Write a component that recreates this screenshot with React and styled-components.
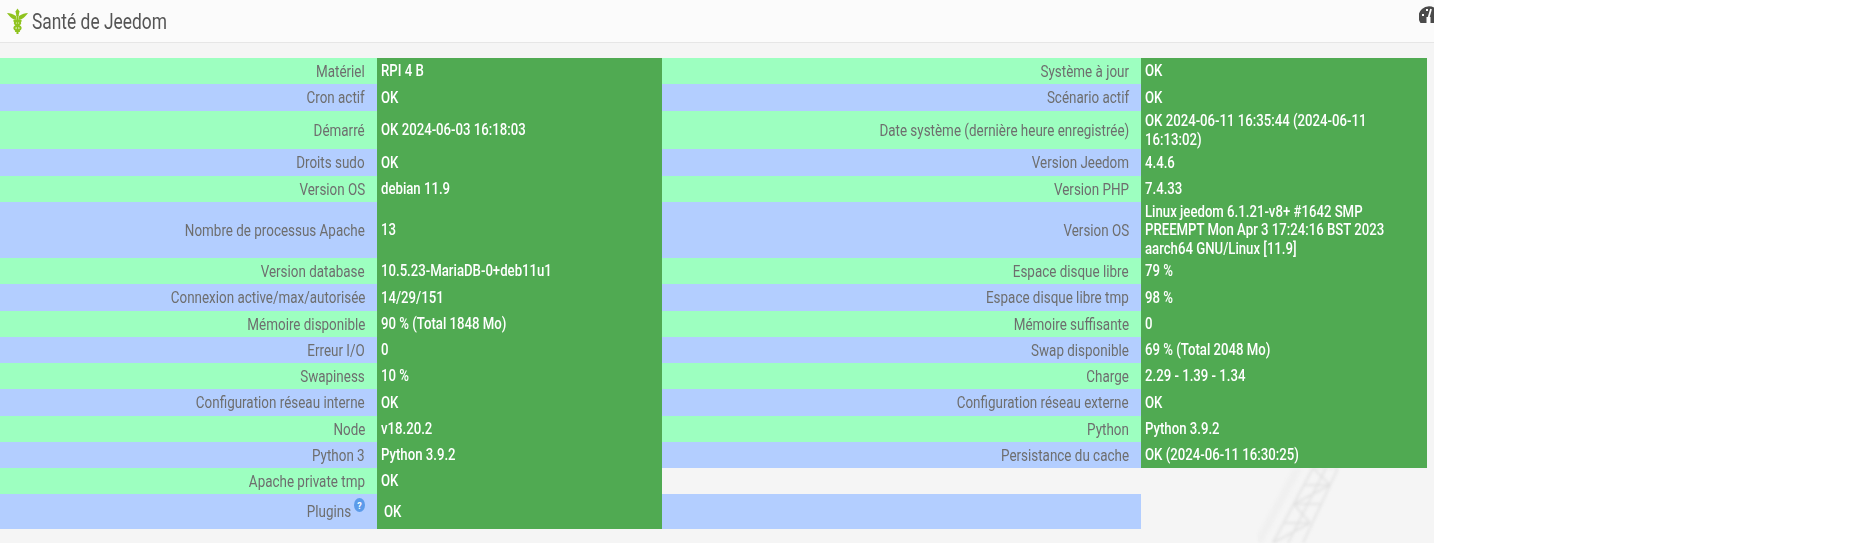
import React from "react"
import styled, { createGlobalStyle } from "styled-components"

const GlobalStyle = createGlobalStyle`
  html, body {
    margin: 0;
    padding: 0;
    background: #fff;
  }
`

const left = [
  ["Matériel", "RPI 4 B"],
  ["Cron actif", "OK"],
  ["Démarré", "OK 2024-06-03 16:18:03"],
  ["Droits sudo", "OK"],
  ["Version OS", "debian 11.9"],
  ["Nombre de processus Apache", "13"],
  ["Version database", "10.5.23-MariaDB-0+deb11u1"],
  ["Connexion active/max/autorisée", "14/29/151"],
  ["Mémoire disponible", "90 % (Total 1848 Mo)"],
  ["Erreur I/O", "0"],
  ["Swapiness", "10 %"],
  ["Configuration réseau interne", "OK"],
  ["Node", "v18.20.2"],
  ["Python 3", "Python 3.9.2"],
  ["Apache private tmp", "OK"],
  ["Plugins", "OK"],
]

const right = [
  ["Système à jour", "OK"],
  ["Scénario actif", "OK"],
  ["Date système (dernière heure enregistrée)", "OK 2024-06-11 16:35:44 (2024-06-11 16:13:02)"],
  ["Version Jeedom", "4.4.6"],
  ["Version PHP", "7.4.33"],
  ["Version OS", "Linux jeedom 6.1.21-v8+ #1642 SMP PREEMPT Mon Apr 3 17:24:16 BST 2023 aarch64 GNU/Linux [11.9]"],
  ["Espace disque libre", "79 %"],
  ["Espace disque libre tmp", "98 %"],
  ["Mémoire suffisante", "0"],
  ["Swap disponible", "69 % (Total 2048 Mo)"],
  ["Charge", "2.29 - 1.39 - 1.34"],
  ["Configuration réseau externe", "OK"],
  ["Python", "Python 3.9.2"],
  ["Persistance du cache", "OK (2024-06-11 16:30:25)"],
]

const heights = [26, 27, 38, 27, 26, 56, 26, 27, 26, 26, 26, 27, 26, 26, 26, 35]

const Page = styled.div`
  position: relative;
  width: 1434px;
  height: 543px;
  overflow: hidden;
  background: #f5f5f5;
  font-family: Roboto, "Liberation Sans", sans-serif;
`

const Header = styled.div`
  display: flex;
  align-items: center;
  justify-content: space-between;
  height: 42px;
  padding-left: 7px;
  background: #fbfbfb;
  border-bottom: 1px solid #e6e6e6;
`

const Title = styled.div`
  display: flex;
  align-items: center;
  gap: 4px;
  color: #555;
  font-size: 22px;
`

const TitleText = styled.span`
  display: inline-block;
  transform: scaleX(0.79);
  transform-origin: left center;
`

const Gauge = styled.svg`
  flex: none;
  width: 20px;
  height: 17px;
  margin: 0 -5px 13px 0;
`

const Table = styled.div`
  position: relative;
  width: 1427px;
  margin-top: 15px;
`

const Row = styled.div`
  display: grid;
  grid-template-columns: 377px 285px 479px 286px;
  height: ${(p) => p.$height}px;
`

const Label = styled.div`
  display: flex;
  align-items: center;
  justify-content: flex-end;
  padding: 0 12px 1px 0;
  background: ${(p) => (p.$odd ? "#b3ceff" : "#9dffc0")};
  color: #6e6e6e;
  font-size: 17px;
`

const LabelText = styled.span`
  display: inline-block;
  white-space: nowrap;
  transform: scaleX(0.79);
  transform-origin: right center;
`

const Value = styled.div`
  display: flex;
  align-items: center;
  padding: 0 0 1px ${(p) => (p.$inset ? 7 : 4)}px;
  background: #50aa52;
  color: #fff;
  font-size: 17px;
  font-weight: 500;
  line-height: 18.3px;
`

const ValueText = styled.span`
  display: inline-block;
  width: 348px;
  flex: none;
  transform: scaleX(0.775);
  transform-origin: left center;
`

const Filler = styled.div`
  background: #b3ceff;
`

const Help = styled.svg`
  flex: none;
  width: 11px;
  height: 14px;
  margin: 0 0 13px 3px;
`

const Tower = styled.svg`
  position: absolute;
  left: 1258px;
  top: 468px;
  width: 100px;
  height: 75px;
  filter: blur(1.6px);
`

function Logo() {
  return (
    <svg width="21" height="26" viewBox="0 0 21 26">
      <path d="M0 5 C3 5 6 6 9 8 L9.5 12 C6 12 3 9 0 5 Z M21 5 C18 5 15 6 12 8 L11.5 12 C15 12 18 9 21 5 Z" fill="#8fc31f" />
      <path d="M8.5 3.5 L10.5 0.5 L12.5 3.5 L11.5 8 L9.5 8 Z" fill="#8fc31f" />
      <rect x="9.5" y="7" width="2" height="19" fill="#8fc31f" />
      <path d="M6.5 13 C14 12 15 16 10.5 17.5 C6 19 6 22 13 23 M14.5 13 C7 12 6 16 10.5 17.5 C15 19 15 22 8 23" fill="none" stroke="#8fc31f" strokeWidth="2" />
    </svg>
  )
}

export default function App() {
  return (
    <>
      <GlobalStyle />
      <Page>
        <Tower viewBox="0 0 100 75">
          <path d="M40 0 L0 75" fill="none" stroke="#f0f0f0" strokeWidth="8" />
          <path d="M55 0 L15 75 M80 0 L45 75 M68 0 L30 75 M55 0 L80 0 M46 17 L72 17 M36 36 L62 36 M26 55 L52 55 M55 0 L72 17 M72 17 L36 36 M36 36 L52 55 M52 55 L15 75" fill="none" stroke="#e0e0e0" strokeWidth="1.6" />
        </Tower>
        <Header>
          <Title>
            <Logo />
            <TitleText>Santé de Jeedom</TitleText>
          </Title>
          <Gauge viewBox="0 0 20 17">
            <path d="M1.5 17 A10.5 10.5 0 1 1 18.5 17 Z" fill="#4a4a4a" />
            <path d="M9.5 12 L12 3" stroke="#fff" strokeWidth="1.8" />
            <rect x="7.5" y="11" width="4" height="6" fill="#fff" />
            <rect x="3" y="8" width="2" height="2" fill="#fff" />
            <rect x="7" y="3" width="2" height="2" fill="#fff" />
            <rect x="15" y="5" width="2" height="2" fill="#fff" />
          </Gauge>
        </Header>
        <Table>
          {heights.map((h, i) => (
            <Row key={i} $height={h}>
              <Label $odd={i % 2 === 1}>
                <LabelText>{left[i][0]}</LabelText>
                {left[i][0] === "Plugins" && (
                  <Help viewBox="0 0 11 14">
                    <ellipse cx="5.5" cy="7" rx="5.5" ry="7" fill="#5b9bea" />
                    <text x="5.5" y="10.5" textAnchor="middle" fontSize="9" fontWeight="700" fill="#fff" fontFamily="Roboto">?</text>
                  </Help>
                )}
              </Label>
              <Value $inset={left[i][0] === "Plugins"}>
                <ValueText>{left[i][1]}</ValueText>
              </Value>
              {right[i] ? (
                <>
                  <Label $odd={i % 2 === 1}>
                    <LabelText>{right[i][0]}</LabelText>
                  </Label>
                  <Value>
                    <ValueText>{right[i][1]}</ValueText>
                  </Value>
                </>
              ) : (
                i === 15 && <Filler />
              )}
            </Row>
          ))}
        </Table>
      </Page>
    </>
  )
}
